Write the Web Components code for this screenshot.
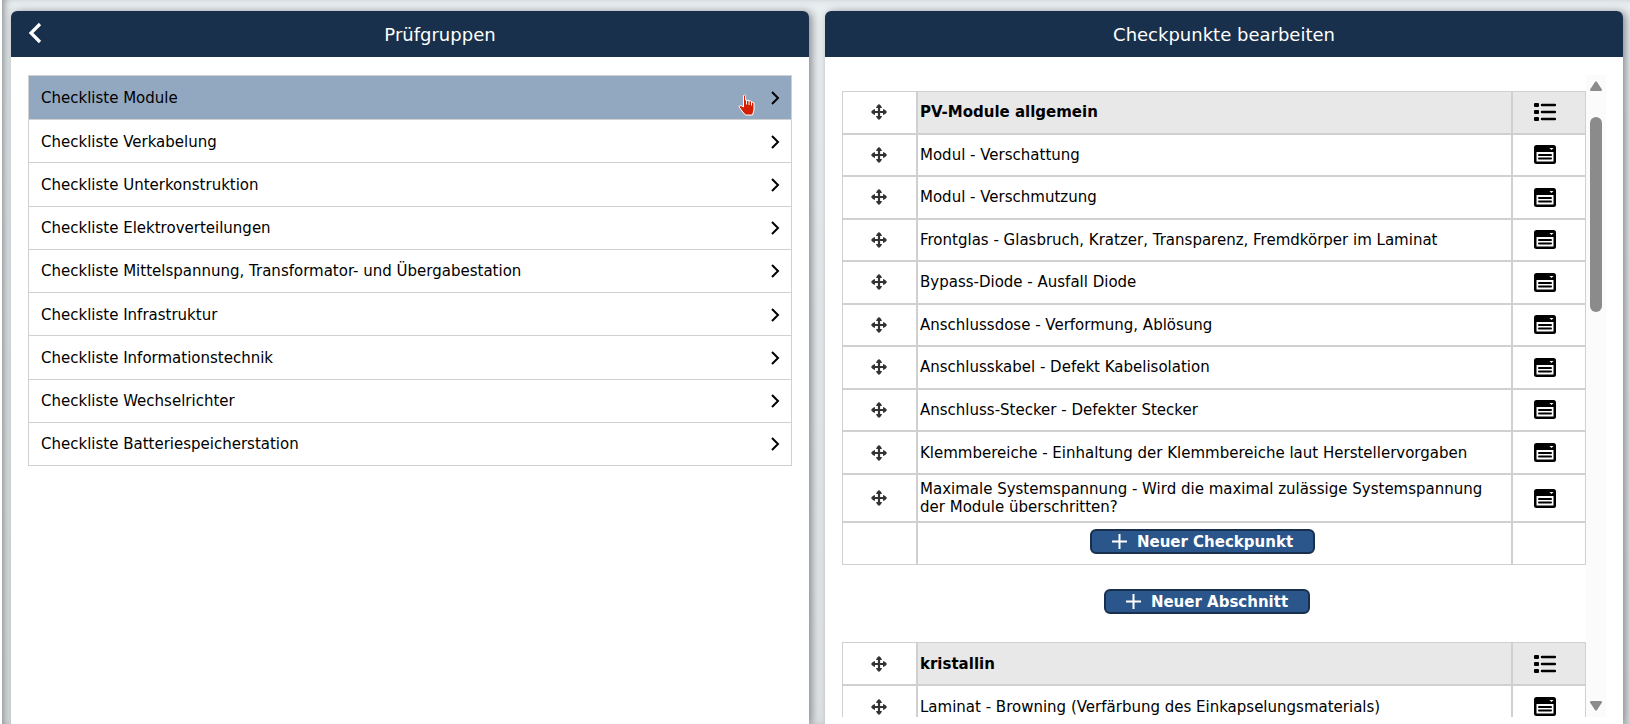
<!DOCTYPE html>
<html lang="de">
<head>
<meta charset="utf-8">
<meta name="viewport" content="width=device-width, initial-scale=1">
<title>Prüfgruppen</title>
<style>
  html {
    background: white;
  }

  body {
    margin: 0 0 0 2px;
    font-family: Verdana, "DejaVu Sans", sans-serif;
    font-size: 15px;
    color: black;
  }
</style>
</head>
<body>
<split-view>
  <panel-box heading="Prüfgruppen" back>
    <group-list></group-list>
  </panel-box>
  <panel-box heading="Checkpunkte bearbeiten">
    <scroll-area>
      <check-section index="0"></check-section>
      <add-button label="Neuer Abschnitt"></add-button>
      <check-section index="1"></check-section>
    </scroll-area>
  </panel-box>
</split-view>

<script>
const groups = [
  'Checkliste Module',
  'Checkliste Verkabelung',
  'Checkliste Unterkonstruktion',
  'Checkliste Elektroverteilungen',
  'Checkliste Mittelspannung, Transformator- und Übergabestation',
  'Checkliste Infrastruktur',
  'Checkliste Informationstechnik',
  'Checkliste Wechselrichter',
  'Checkliste Batteriespeicherstation'
];

const sections = [
  {
    title: 'PV-Module allgemein',
    complete: true,
    points: [
      'Modul - Verschattung',
      'Modul - Verschmutzung',
      'Frontglas - Glasbruch, Kratzer, Transparenz, Fremdkörper im Laminat',
      'Bypass-Diode - Ausfall Diode',
      'Anschlussdose - Verformung, Ablösung',
      'Anschlusskabel - Defekt Kabelisolation',
      'Anschluss-Stecker - Defekter Stecker',
      'Klemmbereiche - Einhaltung der Klemmbereiche laut Herstellervorgaben',
      'Maximale Systemspannung - Wird die maximal zulässige Systemspannung der Module überschritten?'
    ]
  },
  {
    title: 'kristallin',
    points: ['Laminat - Browning (Verfärbung des Einkapselungsmaterials)']
  }
];

const icons = {
  back: /*html*/`<svg width="14" height="22" viewBox="0 0 14 22"><path d="M12 2 3 11l9 9" fill="none" stroke="white" stroke-width="3.200"/></svg>`,
  next: /*html*/`<svg width="9" height="14" viewBox="0 0 9 14"><path d="M1 1l6 6-6 6" fill="none" stroke="black" stroke-width="2"/></svg>`,
  move: /*html*/`<svg width="16" height="16" viewBox="0 0 16 16"><path d="M8 2v12M2 8h12" stroke="#333" stroke-width="2.200"/><path d="M8 0q2.500 1.500 3 4H5q.5-2.500 3-4zM8 16q-2.500-1.500-3-4h6q-.5 2.500-3 4zM0 8q1.500-2.500 4-3v6Q1.500 10.500 0 8zM16 8q-1.500 2.500-4 3V5q2.500.5 4 3z" fill="#333"/></svg>`,
  list: /*html*/`<svg width="22" height="18" viewBox="0 0 22 18"><rect y="0" width="5" height="4" rx="1"/><rect y="7" width="5" height="4" rx="1"/><rect y="14" width="5" height="4" rx="1"/><path d="M8 2h13M8 9h13M8 16h13" stroke="black" stroke-width="2.500" stroke-linecap="round"/></svg>`,
  form: /*html*/`<svg width="22" height="19" viewBox="0 0 22 19"><rect width="22" height="19" rx="2.500"/><path d="M2.500 7h17v9.500h-17z" fill="white"/><path d="M15.500 3h4l-2 2z" fill="white"/><path d="M5 10h12M5 13.500h12" stroke="black" stroke-width="2" stroke-linecap="round"/></svg>`,
  plus: /*html*/`<svg width="15" height="15" viewBox="0 0 15 15"><path d="M7.500 0v15M0 7.500h15" stroke="white" stroke-width="2"/></svg>`,
  hand: /*html*/`<svg width="17" height="22" viewBox="0 0 17 22"><path d="M5.500 1.500Q6.500.5 7.500 1.500V6l5 1 3.500 2v7L14.500 21h-7L4 17 .8 12.500 3 11.500 5.500 13z" fill="#d42000" stroke="white" stroke-width="1"/><path d="M8.500 6v4.500M11 7v4M13.500 8v3.500" stroke="white"/></svg>`
};

const resetButton = `
  button {
    margin: 0;
    padding: 0;
    border: 0;
    background: none;
    font: inherit;
    color: inherit;
    cursor: pointer;
  }
  svg {
    display: block;
  }
`;

class SplitView extends HTMLElement {
  constructor() {
    super()

    this.attachShadow({ mode: 'open' })
    this.shadowRoot.innerHTML = /*html*/`
      <style>
        :host {
          display: grid;
          grid-template-columns: 1fr 1fr;
          gap: 16px;
          box-sizing: border-box;
          height: 100vh;
          padding: 11px 7px 0 9px;
          overflow: hidden;
          background: linear-gradient(#e9eef1, #e0e4e5);
          box-shadow: inset 6px 0 8px -4px #85898c;
        }
      </style>
      <slot></slot>
    `
  }
}

class PanelBox extends HTMLElement {
  constructor() {
    super()

    this.attachShadow({ mode: 'open' })
  }

  connectedCallback() {
    const back = this.hasAttribute('back') ? `<button aria-label="Zurück">${icons.back}</button>` : ''

    this.shadowRoot.innerHTML = /*html*/`
      <style>
        ${resetButton}

        :host {
          display: flex;
          flex-direction: column;
          min-width: 0;
          min-height: 0;
          background: white;
          border-radius: 6px 6px 0 0;
          box-shadow: 3px 1px 8px #888c90;
        }

        header {
          display: flex;
          align-items: center;
          height: 46px;
          flex: none;
          background: #18304b;
          border-radius: 6px 6px 0 0;
          color: white;
        }

        header button {
          width: 60px;
          padding: 0 17px 3px;
        }

        h2 {
          flex: 1;
          margin: 0;
          font-size: 18px;
          font-weight: 400;
          text-align: center;
        }

        .body {
          flex: 1;
          min-height: 0;
          padding: 18px 17px 7px;
        }
      </style>
      <header>${back}<h2>${this.getAttribute('heading')}</h2></header>
      <div class="body"><slot></slot></div>
    `
  }
}

class GroupList extends HTMLElement {
  constructor() {
    super()

    this.attachShadow({ mode: 'open' })
    this.shadowRoot.innerHTML = /*html*/`
      <style>
        ${resetButton}

        :host {
          display: block;
        }

        ul {
          display: grid;
          grid-auto-rows: 1fr;
          box-sizing: border-box;
          min-height: 391px;
          margin: 0;
          padding: 0;
          list-style: none;
          border: 1px solid #d0d0d0;
        }

        li {
          position: relative;
          display: grid;
        }

        li + li {
          border-top: 1px solid #d0d0d0;
        }

        li.active {
          background: #92a8c1;
        }

        button {
          display: flex;
          align-items: center;
          justify-content: space-between;
          padding: 1px 11px 0 12px;
          text-align: left;
        }

        .pointer {
          position: absolute;
          right: 36px;
          top: 18px;
          pointer-events: none;
        }
      </style>
      <ul>
        ${groups.map((name, i) => `
          <li${i === 0 ? ' class="active"' : ''}>
            <button><span>${name}</span>${icons.next}</button>
            ${i === 0 ? `<span class="pointer">${icons.hand}</span>` : ''}
          </li>`).join('')}
      </ul>
    `
  }
}

class AddButton extends HTMLElement {
  constructor() {
    super()

    this.attachShadow({ mode: 'open' })
  }

  connectedCallback() {
    this.shadowRoot.innerHTML = /*html*/`
      <style>
        ${resetButton}

        :host {
          display: flex;
          justify-content: center;
        }

        button {
          display: flex;
          align-items: center;
          gap: 10px;
          height: 25px;
          padding: 0 20px;
          border: 2px solid #18304b;
          border-radius: 6px;
          background: #2a568b;
          color: white;
          font-size: 15px;
          font-weight: 700;
          white-space: nowrap;
        }
      </style>
      <button>${icons.plus}<span>${this.getAttribute('label')}</span></button>
    `
  }
}

class CheckSection extends HTMLElement {
  constructor() {
    super()

    this.attachShadow({ mode: 'open' })
  }

  connectedCallback() {
    const section = sections[this.getAttribute('index')]

    this.shadowRoot.innerHTML = /*html*/`
      <style>
        ${resetButton}

        :host {
          display: block;
        }

        table {
          width: 100%;
          table-layout: fixed;
          border-spacing: 0;
        }

        table.complete {
          height: 474px;
        }

        col.move {
          width: 75px;
        }

        col.edit {
          width: 74px;
        }

        th, td {
          box-sizing: border-box;
          height: 43px;
          padding: 0 2px;
          border: 1px solid #d0d0d0;
          line-height: 18px;
          text-align: left;
        }

        .complete th, .complete td {
          height: 42px;
        }

        td.text {
          padding: 5px 12px 5px 2px;
        }

        td.add {
          padding: 0 24px 4px 0;
        }

        tr.head th, tr.head td.edit {
          background: #e8e8e8;
        }

        td.move button, td.edit button {
          display: block;
          margin: 0 auto;
        }

        td.move {
          padding-right: 4px;
        }

        td.edit {
          padding-right: 10px;
        }
      </style>
      <table${section.complete ? ' class="complete"' : ''}>
        <colgroup><col class="move"><col><col class="edit"></colgroup>
        <tr class="head">
          <td class="move"><button aria-label="Verschieben">${icons.move}</button></td>
          <th>${section.title}</th>
          <td class="edit"><button aria-label="Abschnitt">${icons.list}</button></td>
        </tr>
        ${section.points.map(point => `
          <tr>
            <td class="move"><button aria-label="Verschieben">${icons.move}</button></td>
            <td class="text">${point}</td>
            <td class="edit"><button aria-label="Bearbeiten">${icons.form}</button></td>
          </tr>`).join('')}
        ${section.complete ? `
          <tr><td></td><td class="add"><add-button label="Neuer Checkpunkt"></add-button></td><td></td></tr>` : ''}
      </table>
    `
  }
}

class ScrollArea extends HTMLElement {
  constructor() {
    super()

    this.attachShadow({ mode: 'open' })
    this.shadowRoot.innerHTML = /*html*/`
      <style>
        :host {
          display: flex;
          height: 100%;
          overflow: hidden;
        }

        .content {
          display: flex;
          flex-direction: column;
          gap: 24px;
          flex: 1;
          min-width: 0;
          padding-top: 16px;
        }

        ::slotted(add-button) {
          padding: 0 14px 4px 0;
        }

        .bar {
          display: flex;
          flex-direction: column;
          align-items: center;
          box-sizing: border-box;
          width: 20px;
          padding: 6px 0;
          background: #fbfbfb;
        }

        .track {
          flex: 1;
          padding-top: 26px;
        }

        .thumb {
          width: 12px;
          height: 195px;
          border-radius: 6px;
          background: #8b8b8b;
        }

        svg {
          display: block;
          fill: #8b8b8b;
        }
      </style>
      <div class="content"><slot></slot></div>
      <div class="bar">
        <svg width="12" height="10" viewBox="0 0 12 10"><path d="M5 1q1-1.500 2 0l5 7.500q0 1.500-1 1.500H1q-1 0-1-1.500z"/></svg>
        <div class="track"><div class="thumb"></div></div>
        <svg width="12" height="10" viewBox="0 0 12 10"><path d="M5 9q1 1.500 2 0l5-7.500Q12 0 11 0H1Q0 0 0 1.500z"/></svg>
      </div>
    `
  }
}

window.customElements.define('split-view', SplitView);
window.customElements.define('panel-box', PanelBox);
window.customElements.define('group-list', GroupList);
window.customElements.define('add-button', AddButton);
window.customElements.define('check-section', CheckSection);
window.customElements.define('scroll-area', ScrollArea);
</script>
</body>
</html>
